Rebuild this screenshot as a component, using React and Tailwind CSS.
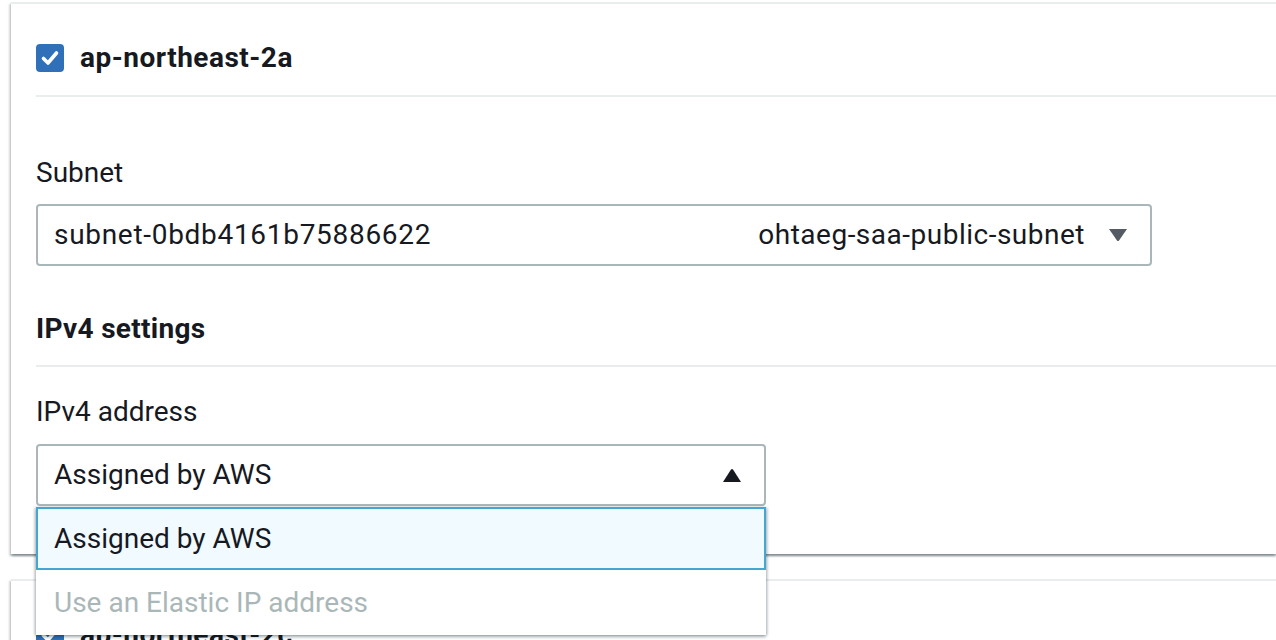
import React from 'react'

const font = { fontFamily: 'Roboto, "Noto Sans", sans-serif' }

function Checkbox() {
    return (
        <span className="flex h-[28px] w-[28px] shrink-0 items-center justify-center rounded-[4px] bg-[#2f70b8]">
            <svg width="20" height="20" viewBox="0 0 20 20" fill="none">
                <path d="M3.5 10.5 L8 15 L16.5 5" stroke="#fff" strokeWidth="3.6" strokeLinecap="round" strokeLinejoin="round" />
            </svg>
        </span>
    )
}

function CaretDown() {
    return (
        <svg width="20" height="14" viewBox="0 0 20 14">
            <path d="M1 1 H19 L11 12.5 Q10 13.6 9 12.5 Z" fill="#545b64" />
        </svg>
    )
}

function CaretUp() {
    return (
        <svg width="20" height="15" viewBox="0 0 20 15">
            <path d="M1 14 H19 L11 1.5 Q10 0.4 9 1.5 Z" fill="#16191f" />
        </svg>
    )
}

function CardHeader({ zone }) {
    return (
        <div className="flex h-[93px] items-center gap-[16px] border-b-2 border-[#eaeded] pt-[17px]">
            <Checkbox />
            <span className="text-[28px] font-bold leading-[40px] tracking-[0.5px] text-[#16191f]">{zone}</span>
        </div>
    )
}

export default function App() {
    return (
        <div className="h-[640px] w-full overflow-hidden bg-white pl-[11px] pt-[2px] text-[#16191f]" style={font}>
            {/* First availability zone card */}
            <section className="relative z-10 border-t-2 border-[#eaeded] bg-white shadow-[0_2px_2px_0_rgba(0,28,36,0.3),2px_2px_2px_0_rgba(0,28,36,0.15),-2px_2px_2px_0_rgba(0,28,36,0.15)]">
                <div className="pl-[25px]">
                    <CardHeader zone="ap-northeast-2a" />

                    <div className="pb-[48px] pt-[56px]">
                        <div className="text-[28px] leading-[40px]">Subnet</div>
                        <div className="mt-[11px] flex h-[62px] w-[1116px] items-center rounded-[4px] border-2 border-[#aab7b8] pl-[16px] pr-[22px] text-[28px]">
                            <span className="flex-1 tracking-[0.7px]">subnet-0bdb4161b75886622</span>
                            <span className="mr-[23px] tracking-[0.5px]">ohtaeg-saa-public-subnet</span>
                            <CaretDown />
                        </div>

                        <div className="mt-[43px] border-b-2 border-[#eaeded] pb-[16px]">
                            <div className="text-[28px] font-bold leading-[40px] tracking-[0.3px]">IPv4 settings</div>
                        </div>

                        <div className="mt-[25px] text-[28px] leading-[40px]">IPv4 address</div>
                        <div className="relative mt-[12px] w-[730px]">
                            <div className="flex h-[62px] items-center justify-between rounded-[4px] border-2 border-[#aab7b8] pl-[16px] pr-[22px] text-[28px]">
                                <span>Assigned by AWS</span>
                                <CaretUp />
                            </div>

                            {/* Open dropdown list */}
                            <div className="absolute left-0 right-0 top-full z-20 mt-[1px] bg-white shadow-[0_2px_3px_0_rgba(0,28,36,0.35),2px_0_2px_0_rgba(0,28,36,0.12),-2px_0_2px_0_rgba(0,28,36,0.12)]">
                                <div className="flex h-[63px] items-center border-2 border-[#44a6d1] bg-[#f1faff] pl-[16px] text-[28px]">
                                    Assigned by AWS
                                </div>
                                <div className="flex h-[65px] items-center pl-[18px] text-[28px] text-[#aab7b8]">
                                    Use an Elastic IP address
                                </div>
                            </div>
                        </div>
                    </div>
                </div>
            </section>

            {/* Second availability zone card, mostly hidden */}
            <section className="mt-[25px] border-t-2 border-[#eaeded] bg-white shadow-[0_2px_2px_0_rgba(0,28,36,0.3),2px_2px_2px_0_rgba(0,28,36,0.15),-2px_2px_2px_0_rgba(0,28,36,0.15)]">
                <div className="pl-[25px]">
                    <CardHeader zone="ap-northeast-2c" />
                </div>
            </section>
        </div>
    )
}
